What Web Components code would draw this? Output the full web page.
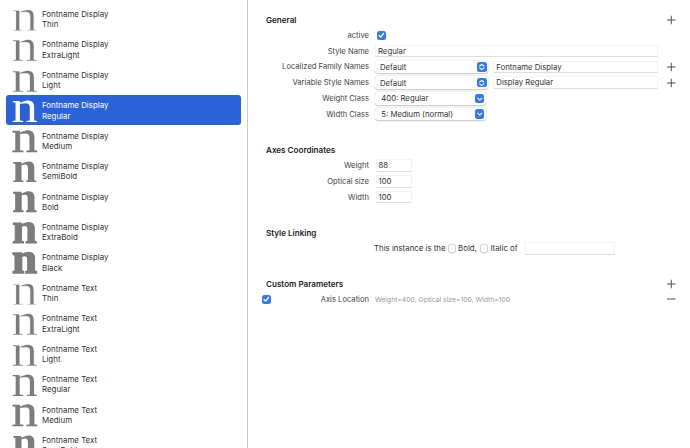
<!DOCTYPE html>
<html>
<head>
<meta charset="utf-8">
<style>
  html, body { margin: 0; height: 100%; overflow: hidden; background: #fff; }
  body { font-family: Inter, "Liberation Sans", sans-serif; color: #333; }
  app-window { height: 448px; }
</style>
</head>
<body>
<app-window>
  <instance-list slot="side"></instance-list>
  <form-section title="General" add style="--after:20px">
    <form-row label="active"><check-box checked style="margin-left:2px"></check-box></form-row>
    <form-row label="Style Name"><text-field value="Regular" width="283"></text-field></form-row>
    <form-row label="Localized Family Names" add>
      <pop-up value="Default" width="113" kind="updown"></pop-up>
      <text-field value="Fontname Display" width="165"></text-field>
    </form-row>
    <form-row label="Variable Style Names" add>
      <pop-up value="Default" width="113" kind="updown"></pop-up>
      <text-field value="Display Regular" width="165"></text-field>
    </form-row>
    <form-row label="Weight Class"><pop-up value="400: Regular" width="110.5" kind="down" inset></pop-up></form-row>
    <form-row label="Width Class"><pop-up value="5: Medium (normal)" width="110.5" kind="down" inset></pop-up></form-row>
  </form-section>
  <form-section title="Axes Coordinates" style="--after:19.7px">
    <form-row label="Weight"><text-field value="88" width="36" style="margin-left:.5px"></text-field></form-row>
    <form-row label="Optical size"><text-field value="100" width="36" style="margin-left:.5px"></text-field></form-row>
    <form-row label="Width"><text-field value="100" width="36" style="margin-left:.5px"></text-field></form-row>
  </form-section>
  <form-section title="Style Linking" style="--after:19.5px">
    <link-row></link-row>
  </form-section>
  <form-section title="Custom Parameters" add>
    <form-row label="Axis Location" checked remove><span style="font-size:6.8px;color:#999;white-space:nowrap">Weight=400, Optical size=100, Width=100</span></form-row>
  </form-section>
</app-window>

<script>
// small +/- button used by section heads and rows
class IconButton extends HTMLElement {
  connectedCallback() {
    const minus = this.hasAttribute("minus");
    this.attachShadow({ mode: "open" }).innerHTML = `
    <style>
      :host{ display:block; width:10px; height:10px; }
      svg{ display:block; }
    </style>
    <svg width="10" height="10" viewBox="0 0 10 10" fill="none" stroke="#3c3c3c" stroke-width="0.9">
      <path d="M1 5H9.5${minus ? "" : "M5.25 0.75V9.25"}"/>
    </svg>`;
  }
}
customElements.define("icon-button", IconButton);

class CheckBox extends HTMLElement {
  connectedCallback() {
    const on = this.hasAttribute("checked");
    this.attachShadow({ mode: "open" }).innerHTML = `
    <style>
      :host{ display:block; width:8.5px; height:8.5px; flex:none; }
      .box{ width:8.5px; height:8.5px; box-sizing:border-box; border-radius:2.5px; }
      .on{ background:#2f7bf6; }
      .off{ background:#fff; border:0.5px solid #cfcfcf; box-shadow:0 0.5px 1px rgba(0,0,0,.12); }
      svg{ display:block; width:8.5px; height:8.5px; }
    </style>
    <div class="box ${on ? "on" : "off"}">
      ${on ? `<svg viewBox="0 0 9 9" fill="none" stroke="#fff" stroke-width="1.4" stroke-linecap="round" stroke-linejoin="round"><path d="M2.2 4.7L3.9 6.5L6.9 2.5"/></svg>` : ""}
    </div>`;
  }
}
customElements.define("check-box", CheckBox);

class TextField extends HTMLElement {
  connectedCallback() {
    const w = this.getAttribute("width");
    this.attachShadow({ mode: "open" }).innerHTML = `
    <style>
      :host{ display:block; flex:none; }
      .field{
        box-sizing:border-box; height:12.5px; padding:0 2px;
        background:#fff;
        border:0.5px solid #f4f4f4; border-bottom:1px solid #dedede;
        font-size:7.75px; line-height:11.5px; color:#333; white-space:nowrap;
      }
    </style>
    <div class="field" style="width:${w}px">${this.getAttribute("value") || ""}</div>`;
  }
}
customElements.define("text-field", TextField);

class PopUp extends HTMLElement {
  connectedCallback() {
    const w = this.getAttribute("width");
    const up = this.getAttribute("kind") === "updown";
    const chevrons = up
      ? `<path d="M2.8 4.2L5 2.4L7.2 4.2M2.8 6.2L5 8L7.2 6.2"/>`
      : `<path d="M2.8 4.3L5 6.4L7.2 4.3"/>`;
    this.attachShadow({ mode: "open" }).innerHTML = `
    <style>
      :host{ display:block; flex:none; }
      .pop{
        box-sizing:border-box; height:12.5px; display:flex; align-items:center; justify-content:space-between;
        padding:0 1.5px 0 ${this.hasAttribute("inset") ? 6.3 : 5}px;
        background:#fff; border-radius:3px;
        box-shadow:0 0.5px 1.5px rgba(0,0,0,.22), 0 0 0 0.5px rgba(0,0,0,.03);
        font-size:7.75px; color:#333; white-space:nowrap;
      }
      .btn{ width:9.5px; height:9.5px; border-radius:2.5px; background:#2f7bf6; flex:none; }
      svg{ display:block; width:9.5px; height:9.5px; }
    </style>
    <div class="pop" style="width:${w}px">
      <span>${this.getAttribute("value")}</span>
      <div class="btn"><svg viewBox="0 0 10 10" fill="none" stroke="#fff" stroke-width="1.1" stroke-linecap="round" stroke-linejoin="round">${chevrons}</svg></div>
    </div>`;
  }
}
customElements.define("pop-up", PopUp);

class FormRow extends HTMLElement {
  connectedCallback() {
    const trailing = this.hasAttribute("add") ? "<icon-button></icon-button>"
      : this.hasAttribute("remove") ? "<icon-button minus></icon-button>" : "";
    this.attachShadow({ mode: "open" }).innerHTML = `
    <style>
      :host{ display:grid; grid-template-columns:107px 1fr 10px; column-gap:6px; align-items:center; height:15.75px; }
      .label{ display:flex; align-items:center; justify-content:space-between; font-size:7.6px; color:#444; white-space:nowrap; }
      .value{ display:flex; align-items:center; gap:5.3px; min-width:0; }
      .text{ margin-left:auto; }
    </style>
    <div class="label">${this.hasAttribute("checked") ? "<check-box checked></check-box>" : "<span></span>"}<span class="text">${this.getAttribute("label")}</span></div>
    <div class="value"><slot></slot></div>
    ${trailing}`;
  }
}
customElements.define("form-row", FormRow);

class FormSection extends HTMLElement {
  connectedCallback() {
    this.attachShadow({ mode: "open" }).innerHTML = `
    <style>
      :host{ display:block; margin-bottom:var(--after, 0); }
      .head{ display:flex; align-items:center; justify-content:space-between; height:15.75px; padding-left:4px; }
      h2{ margin:0; font-size:8.1px; font-weight:600; color:#222; white-space:nowrap; }
    </style>
    <div class="head"><h2>${this.getAttribute("title")}</h2>${this.hasAttribute("add") ? "<icon-button></icon-button>" : ""}</div>
    <slot></slot>`;
  }
}
customElements.define("form-section", FormSection);

class LinkRow extends HTMLElement {
  connectedCallback() {
    this.attachShadow({ mode: "open" }).innerHTML = `
    <style>
      :host{ display:flex; align-items:center; height:15.75px; margin-left:112px; font-size:7.85px; color:#333; white-space:nowrap; }
      check-box{ margin:0 2px; }
      text-field{ margin-left:6px; }
    </style>
    <span>This instance is the</span><check-box></check-box><span>Bold,</span>
    <check-box style="margin-left:3px"></check-box><span>Italic of</span>
    <text-field width="91"></text-field>`;
  }
}
customElements.define("link-row", LinkRow);

// one row of the sidebar: big sample letter and two lines of names
class InstanceRow extends HTMLElement {
  connectedCallback() {
    const sel = this.hasAttribute("selected");
    const stroke = parseFloat(this.getAttribute("stroke"));
    const bold = this.hasAttribute("bold");
    const color = sel ? "#fff" : "#7c7c7c";
    // negative stroke means erode the letter with the row background
    const strokeColor = stroke < 0 ? (sel ? "#2a62d9" : "#fff") : color;
    this.attachShadow({ mode: "open" }).innerHTML = `
    <style>
      :host{ display:flex; align-items:center; height:30.45px; margin:0 6px; border-radius:3px; flex:none; ${sel ? "background:#2a62d9;" : ""} }
      .glyph{
        width:36px; flex:none; text-align:center; padding-left:1px; box-sizing:border-box;
        font:${bold ? "bold 45px" : "47px"}/30px "Liberation Serif", serif; color:${color};
        -webkit-text-stroke:${Math.abs(stroke)}px ${strokeColor};
        height:30px; position:relative; top:-4px;
      }
      /* own layer so the big letter gets grey antialiasing, no colour fringe */
      .glyph span{ display:inline-block; transform:scaleX(${bold ? 1 : 1.12}); will-change:transform; }
      .names{ font-size:7.9px; line-height:10.3px; padding-top:1px; color:${sel ? "#fff" : "#333"}; white-space:nowrap; }
    </style>
    <div class="glyph"><span>n</span></div>
    <div class="names">${this.getAttribute("family")}<br>${this.getAttribute("weight")}</div>`;
  }
}
customElements.define("instance-row", InstanceRow);

class InstanceList extends HTMLElement {
  connectedCallback() {
    const display = [["Thin",-.8],["ExtraLight",-.55],["Light",-.3],["Regular",0],["Medium",.5],["SemiBold",-.1,1],["Bold",.3,1],["ExtraBold",1,1],["Black",1.6,1]];
    const text = [["Thin",-.8],["ExtraLight",-.55],["Light",-.4],["Regular",-.15],["Medium",.4],["SemiBold",-.1,1]];
    const row = (family, [w, s, b]) =>
      `<instance-row family="${family}" weight="${w}" stroke="${s}"${b ? " bold" : ""}${family === "Fontname Display" && w === "Regular" ? " selected" : ""}></instance-row>`;
    this.attachShadow({ mode: "open" }).innerHTML = `
    <style>
      :host{ display:flex; flex-direction:column; padding-top:3.5px; box-sizing:border-box; }
    </style>
    ${display.map(d => row("Fontname Display", d)).join("")}
    ${text.map(d => row("Fontname Text", d)).join("")}`;
  }
}
customElements.define("instance-list", InstanceList);

class AppWindow extends HTMLElement {
  connectedCallback() {
    this.attachShadow({ mode: "open" }).innerHTML = `
    <style>
      :host{ display:grid; grid-template-columns:248px 1fr; }
      .side{ border-right:1px solid #c9c9c9; overflow:hidden; height:448px; box-sizing:border-box; }
      .main{ padding:11.8px 14px 0 14px; min-width:0; }
    </style>
    <div class="side"><slot name="side"></slot></div>
    <div class="main"><slot></slot></div>`;
  }
}
customElements.define("app-window", AppWindow);
</script>
</body>
</html>
